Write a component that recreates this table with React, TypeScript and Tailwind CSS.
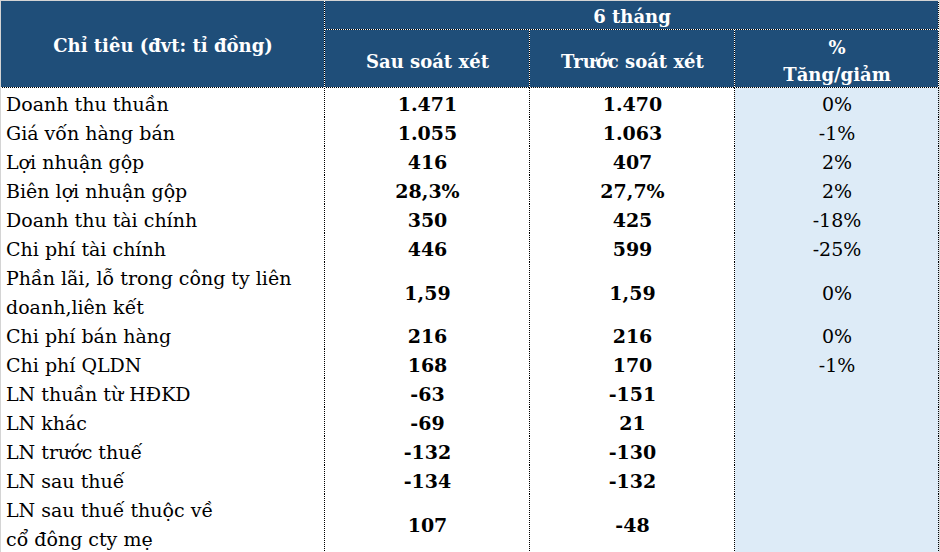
import React from "react";

type Row = {
  label: React.ReactNode;
  after: string;
  before: string;
  change: string;
  tall?: boolean;
};

const ROWS: Row[] = [
  { label: "Doanh thu thuần", after: "1.471", before: "1.470", change: "0%" },
  { label: "Giá vốn hàng bán", after: "1.055", before: "1.063", change: "-1%" },
  { label: "Lợi nhuận gộp", after: "416", before: "407", change: "2%" },
  { label: "Biên lợi nhuận gộp", after: "28,3%", before: "27,7%", change: "2%" },
  { label: "Doanh thu tài chính", after: "350", before: "425", change: "-18%" },
  { label: "Chi phí tài chính", after: "446", before: "599", change: "-25%" },
  {
    label: (
      <>
        Phần lãi, lỗ trong công ty liên
        <br />
        doanh,liên kết
      </>
    ),
    after: "1,59",
    before: "1,59",
    change: "0%",
    tall: true,
  },
  { label: "Chi phí bán hàng", after: "216", before: "216", change: "0%" },
  { label: "Chi phí QLDN", after: "168", before: "170", change: "-1%" },
  { label: "LN thuần từ HĐKD", after: "-63", before: "-151", change: "" },
  { label: "LN khác", after: "-69", before: "21", change: "" },
  { label: "LN trước thuế", after: "-132", before: "-130", change: "" },
  { label: "LN sau thuế", after: "-134", before: "-132", change: "" },
  {
    label: (
      <>
        LN sau thuế thuộc về
        <br />
        cổ đông cty mẹ
      </>
    ),
    after: "107",
    before: "-48",
    change: "",
    tall: true,
  },
];

// Excel-style dotted gridlines on the right and bottom edge: 1px on / 1px off tiles
const headCell =
  "flex items-center justify-center bg-[#1f4e79] text-white font-bold text-[18px] bg-[image:linear-gradient(to_bottom,#fff_50%,#000_50%),linear-gradient(to_right,#fff_50%,#000_50%)] bg-position-[right_top,left_bottom] bg-size-[1px_2px,2px_1px] [background-repeat:repeat-y,repeat-x]";
const bodyCell =
  "flex items-center bg-[image:linear-gradient(to_bottom,#000_50%,transparent_50%),linear-gradient(to_right,#000_50%,transparent_50%)] bg-position-[right_top,left_bottom] bg-size-[1px_2px,2px_1px] [background-repeat:repeat-y,repeat-x]";

export default function App() {
  return (
    <div className="w-[940px] h-[552px] bg-[#d4d4d4] pl-px pt-px font-['DejaVu_Serif',serif] text-black">
      <div className="w-[938px]">
        <div className="grid grid-cols-[324px_205px_205px_204px] grid-rows-[29px_58px]">
          <div className={`${headCell} row-span-2 pt-[2px]`}>Chỉ tiêu (đvt: tỉ đồng)</div>
          <div className={`${headCell} col-span-3 pt-[2px]`}>6 tháng</div>
          <div className={`${headCell} pt-[4px]`}>Sau soát xét</div>
          <div className={`${headCell} pt-[4px]`}>Trước soát xét</div>
          <div className={`${headCell} flex-col leading-[27px] pt-[4px]`}>
            <span>%</span>
            <span>Tăng/giảm</span>
          </div>
        </div>

        {ROWS.map((r, i) => (
          <div
            key={i}
            className={`grid grid-cols-[324px_205px_205px_204px] ${r.tall ? "h-[58px]" : "h-[29px]"}`}
          >
            <div className={`${bodyCell} bg-white pl-[5px] pt-[2px] text-[19px] leading-[29px] whitespace-nowrap`}>
              <span>{r.label}</span>
            </div>
            <div className={`${bodyCell} bg-white justify-center pt-[2px] text-[19px] font-bold`}>
              {r.after}
            </div>
            <div className={`${bodyCell} bg-white justify-center pt-[2px] text-[19px] font-bold`}>
              {r.before}
            </div>
            <div className={`${bodyCell} bg-[#ddebf7] justify-center pt-[2px] text-[19px]`}>
              {r.change}
            </div>
          </div>
        ))}
      </div>
    </div>
  );
}
